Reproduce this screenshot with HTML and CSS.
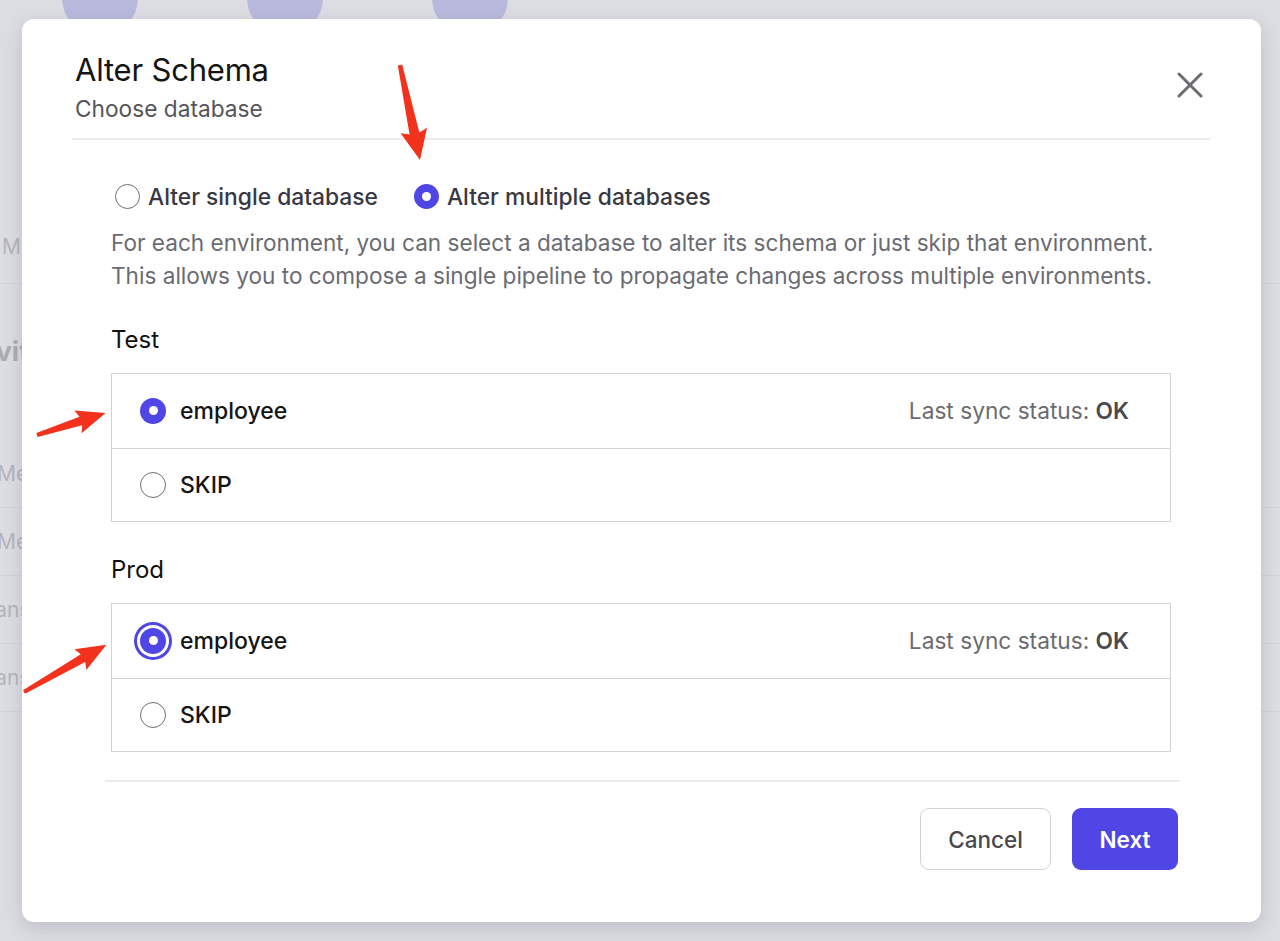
FILE: index.html
```html
<!DOCTYPE html>
<html lang="en">
<head>
<meta charset="utf-8">
<title>Alter Schema</title>
<link rel="stylesheet" href="styles.css">
</head>
<body>
<div class="page">
  <div class="bg-circles">
    <span class="bg-circle"></span>
    <span class="bg-circle"></span>
    <span class="bg-circle"></span>
  </div>
  <ul class="bg-list">
    <li class="bg-item bg-m">Migration</li>
    <li class="bg-item bg-head">Activity</li>
    <li class="bg-item bg-me1">Members</li>
    <li class="bg-item bg-me2">Members</li>
    <li class="bg-item bg-ans1">Transfer</li>
    <li class="bg-item bg-ans2">Transfer</li>
  </ul>
</div>

<div class="modal" role="dialog" aria-labelledby="modal-title">
  <header class="modal-header">
    <div class="titles">
      <h1 id="modal-title" class="title">Alter Schema</h1>
      <p class="subtitle">Choose database</p>
    </div>
    <button class="close" aria-label="Close">
      <svg width="26" height="26" viewBox="0 0 26 26"><path d="M2 2 L24 24 M24 2 L2 24" stroke="#6b6b70" stroke-width="3" stroke-linecap="round" fill="none"/></svg>
    </button>
  </header>
  <div class="divider"></div>

  <main class="modal-body">
    <div class="mode-row">
      <label class="mode"><span class="radio"></span>Alter single database</label>
      <label class="mode"><span class="radio checked"></span>Alter multiple databases</label>
    </div>
    <p class="desc">For each environment, you can select a database to alter its schema or just skip that environment.<br>This allows you to compose a single pipeline to propagate changes across multiple environments.</p>

    <section class="env">
      <h2 class="env-name">Test</h2>
      <div class="db-table">
        <div class="db-row">
          <span class="radio big checked"></span>
          <span class="db-name">employee</span>
          <span class="status">Last sync status: <b>OK</b></span>
        </div>
        <div class="db-row">
          <span class="radio big"></span>
          <span class="db-name">SKIP</span>
        </div>
      </div>
    </section>

    <section class="env">
      <h2 class="env-name">Prod</h2>
      <div class="db-table">
        <div class="db-row">
          <span class="radio big checked focus"></span>
          <span class="db-name">employee</span>
          <span class="status">Last sync status: <b>OK</b></span>
        </div>
        <div class="db-row">
          <span class="radio big"></span>
          <span class="db-name">SKIP</span>
        </div>
      </div>
    </section>
  </main>

  <footer class="modal-footer">
    <button class="btn btn-cancel">Cancel</button>
    <button class="btn btn-next">Next</button>
  </footer>
</div>

<svg class="annotations" width="1280" height="941" viewBox="0 0 1280 941" aria-hidden="true">
  <g fill="#f2321c">
    <g transform="translate(400 65) rotate(78.1)">
      <polygon points="0,-2.2 70,-5 67,-13.5 97,0 67,13.5 70,5 0,2.2"/>
    </g>
    <g transform="translate(37 435) rotate(-17.7)">
      <polygon points="0,-2 46,-4.5 43,-12 72,0 43,12 46,4.5 0,2"/>
    </g>
    <g transform="translate(24 692) rotate(-29.8)">
      <polygon points="0,-2 68,-4.5 65,-12 95,0 65,12 68,4.5 0,2"/>
    </g>
  </g>
</svg>
</body>
</html>
```

FILE: styles.css
```css
* { box-sizing: border-box; }

html, body {
  margin: 0;
  padding: 0;
  width: 1280px;
  height: 941px;
  overflow: hidden;
}

body {
  background: #dcdde2;
  font-family: Inter, "Noto Sans", "Liberation Sans", sans-serif;
  color: #111;
  position: relative;
}

/* ---------- background page (behind the overlay) ---------- */
.page {
  padding: 0;
}

.bg-circles {
  display: flex;
  gap: 109px;
  padding-left: 62px;
  margin-top: -40px;
}

.bg-circle {
  width: 76px;
  height: 76px;
  border-radius: 50%;
  background: #b9b9dd;
}

.bg-list {
  list-style: none;
  margin: 0;
  padding: 0;
  margin-top: 174px;
  color: #b4b5bc;
  font-size: 21px;
}

.bg-item {
  height: 68px;
  line-height: 68px;
  white-space: nowrap;
  border-bottom: 1px solid #d2d3d8;
}

.bg-m { margin-left: 2px; height: 74px; line-height: 74px; }
.bg-head {
  margin-left: -57px;
  font-weight: 700;
  font-size: 27px;
  color: #acadb4;
  height: 156px;
  line-height: 136px;
  border-bottom: none;
}
.bg-me1 { margin-left: -3px; }
.bg-me2 { margin-left: -3px; }
.bg-ans1 { margin-left: -25px; }
.bg-ans2 { margin-left: -25px; }

/* ---------- modal ---------- */
.modal {
  position: absolute;
  left: 22px;
  top: 19px;
  width: 1239px;
  height: 903px;
  background: #fff;
  border-radius: 12px;
  box-shadow: 0 6px 18px rgba(60, 60, 80, 0.18);
  display: flex;
  flex-direction: column;
}

.modal-header {
  display: flex;
  justify-content: space-between;
  align-items: flex-start;
  padding: 32px 58px 0 53px;
}

.title {
  margin: 0;
  font-size: 31px;
  font-weight: 400;
  line-height: 38px;
  color: #141414;
  letter-spacing: -0.2px;
}

.subtitle {
  margin: 5px 0 0;
  font-size: 22.7px;
  line-height: 30px;
  color: #55555a;
}

.close {
  border: none;
  background: none;
  padding: 0;
  margin-top: 21px;
  width: 26px;
  height: 26px;
  cursor: pointer;
}

.close svg { display: block; }

.divider {
  height: 2px;
  background: #ececee;
  margin: 14px 51px 0 50px;
}

.modal-body {
  padding: 0 90px 0 89px;
}

.mode-row {
  display: flex;
  gap: 36px;
  margin-top: 39px;
  padding-left: 4px;
  height: 34px;
  align-items: center;
}

.mode {
  display: flex;
  align-items: center;
  gap: 8px;
  font-size: 22.8px;
  color: #383845;
  font-weight: 500;
}

.radio {
  flex: none;
  width: 25px;
  height: 25px;
  border-radius: 50%;
  border: 1.5px solid #6f6f74;
  background: #fff;
  position: relative;
}

.radio.checked {
  border: none;
  background: #4f46e5;
}

.radio.checked::after {
  content: "";
  position: absolute;
  left: 50%;
  top: 50%;
  width: 9px;
  height: 9px;
  margin: -4.5px 0 0 -4.5px;
  border-radius: 50%;
  background: #fff;
}

.radio.big {
  width: 26px;
  height: 26px;
}

.radio.focus {
  box-shadow: 0 0 0 3px #fff, 0 0 0 6px #4f46e5;
}

.desc {
  margin: 13px 0 0;
  font-size: 22.6px;
  line-height: 33px;
  color: #6b6b72;
  white-space: nowrap;
}

.env-name {
  margin: 33px 0 0;
  font-size: 24px;
  font-weight: 400;
  line-height: 30px;
  color: #111;
}

.db-table {
  margin-top: 18px;
  border: 1px solid #d3d3d6;
}

.db-row {
  display: flex;
  align-items: center;
  height: 73.5px;
  padding: 0 41px 0 28px;
}

.db-row + .db-row {
  border-top: 1px solid #d3d3d6;
}

.db-name {
  margin-left: 14px;
  font-size: 23px;
  font-weight: 500;
  color: #151515;
}

.status {
  margin-left: auto;
  font-size: 22.7px;
  color: #6b6b70;
}

.status b {
  color: #4a4a4f;
  font-weight: 600;
}

.modal-footer {
  margin: 28px 81px 0 83px;
  border-top: 2px solid #ececee;
  padding: 26px 2px 0 0;
  display: flex;
  justify-content: flex-end;
  gap: 21px;
}

.btn {
  height: 62px;
  border-radius: 9px;
  font-family: inherit;
  font-size: 22.5px;
  font-weight: 600;
  cursor: pointer;
}

.btn-cancel {
  width: 131px;
  background: #fff;
  border: 1.5px solid #d3d3d6;
  color: #48484d;
  font-weight: 500;
}

.btn-next {
  width: 106px;
  background: #4f46e5;
  border: none;
  color: #fff;
}

/* ---------- annotation layer (arrows over everything) ---------- */
.annotations {
  position: absolute;
  left: 0;
  top: 0;
  pointer-events: none;
}
```
